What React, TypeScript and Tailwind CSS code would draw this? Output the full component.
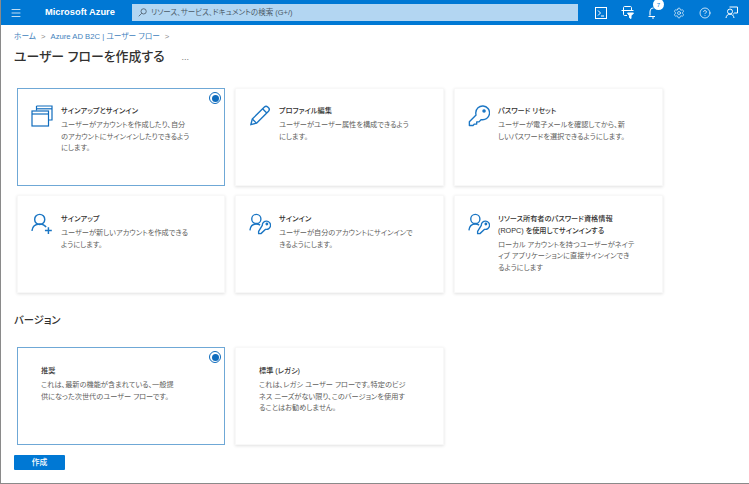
import React from 'react';
import { Menu, Settings, CircleHelp } from 'lucide-react';

const JP = "font-['Segoe_UI','Liberation_Sans','Noto_Sans_CJK_JP',sans-serif] [font-feature-settings:'palt']";

function WindowsIcon() {
  return (
    <svg width="22" height="22" viewBox="0 0 22 22" fill="none" stroke="#0f6cbd" strokeWidth="1.2">
      <path d="M5.500 1h15.500v14H17.500" />
      <path d="M5.500 3.800h15.500" />
      <path d="M5.500 5.500V1" />
      <rect x="1" y="6" width="16.500" height="15" fill="#fff" />
      <path d="M1 9h16.500" />
    </svg>
  );
}

function PencilIcon() {
  return (
    <svg width="22" height="22" viewBox="0 0 24 24" fill="none" stroke="#1b76c4" strokeWidth="1.500" strokeLinejoin="round">
      <path d="M2 21.500l1.600-6.200L16.800 2.200c1-1 2.600-1 3.600 0l.9.9c1 1 1 2.600 0 3.600L8.200 19.800z" />
      <path d="M3.600 15.300l4.600 4.500M14.800 4.200l4.600 4.600" />
    </svg>
  );
}

function KeyIcon() {
  return (
    <svg width="22" height="22" viewBox="0 0 24 24" fill="none" stroke="#1b76c4" strokeWidth="1.500" strokeLinejoin="round">
      <path d="M8.500 8.500a7.500 7.500 0 1 1 6 7.400L12 18.400H9.500v2.400H7l-1.500 1.500H1.500v-4l7.300-7.300a7.500 7.500 0 0 1-.3-2.500z" />
      <circle cx="17.500" cy="6.500" r="1.200" fill="#1b76c4" />
    </svg>
  );
}

function UserPlusIcon() {
  return (
    <svg width="22" height="22" viewBox="0 0 24 24" fill="none" stroke="#1b76c4" strokeWidth="1.600">
      <circle cx="9.500" cy="7" r="5.500" />
      <path d="M1 19.500c.5-4.500 3.800-7.500 8.500-7.500 3 0 5.500 1.300 7 3.500" />
      <path d="M19 15.500v7.500M15.200 19.200h7.500" />
    </svg>
  );
}

function UserKeyIcon() {
  return (
    <svg width="22" height="22" viewBox="0 0 24 24" fill="none" stroke="#1b76c4" strokeWidth="1.500" strokeLinejoin="round">
      <circle cx="8" cy="6.500" r="5" />
      <path d="M1 19c.4-4 3-7 7-7 1.600 0 3 .4 4.100 1.200" />
      <path d="M14.500 13.500a4.500 4.500 0 1 1 3.600 4.300L13 22.500h-2.500V20z" />
      <circle cx="19.500" cy="12" r=".8" fill="#1b76c4" />
    </svg>
  );
}

function TopIcon({ children }: { children: React.ReactNode }) {
  return <div className="relative flex w-[26px] items-center justify-center">{children}</div>;
}

function Card({ icon, title, lines, selected, titleLines, padTop }: {
  icon?: React.ReactNode;
  title?: string;
  titleLines?: string[];
  lines: string[];
  selected?: boolean;
  padTop: string;
}) {
  return (
    <div className={`relative flex bg-white ${selected ? 'border border-[#6fa8d6]' : 'border border-[#f8f8f8] shadow-[0_1px_3px_rgba(0,0,0,0.12)]'} ${padTop}`}>
      {icon ? <div className="w-[43px] shrink-0 pl-[13px]">{icon}</div> : <div className="w-[23px] shrink-0" />}
      <div className="whitespace-nowrap">
        <div className="text-[7.200px] leading-[11.500px] font-medium text-[#323130]">
          {title ?? titleLines?.map((t) => <div key={t}>{t}</div>)}
        </div>
        <div className="mt-[2.500px] text-[7.200px] leading-[11.500px] text-[#605e5c]">
          {lines.map((l) => <div key={l}>{l}</div>)}
        </div>
      </div>
      {selected && (
        <span className="absolute right-[3px] top-[3px] flex h-[12px] w-[12px] items-center justify-center rounded-full border border-[#0f6cbd]">
          <span className="h-[7px] w-[7px] rounded-full bg-[#0f6cbd]" />
        </span>
      )}
    </div>
  );
}

export default function App() {
  return (
    <div className={`${JP} flex h-[484px] w-[749px] flex-col overflow-hidden border-l border-b border-[#8a8a8a] bg-white`}>
      <header className="flex h-[25px] shrink-0 items-center bg-[#0078d4] text-white">
        <Menu className="ml-[9px] h-[12px] w-[12px]" strokeWidth={1.500} />
        <span className="ml-[23px] w-[87px] text-[9.300px] font-semibold font-['Liberation_Sans',sans-serif]">Microsoft Azure</span>
        <div className="flex h-[17px] w-[446px] items-center bg-[#b3d6f2] text-[#4b5a68]">
          <svg className="ml-[6px]" width="9" height="9" viewBox="0 0 12 12" fill="none" stroke="currentColor" strokeWidth="1.100">
            <circle cx="7.500" cy="4.500" r="3.500" />
            <path d="M5 7L1 11" />
          </svg>
          <span className="ml-[4px] text-[7.500px]">リソース、サービス、ドキュメントの検索 (G+/)</span>
        </div>
        <div className="ml-[10px] flex items-center">
          <TopIcon>
            <svg width="12" height="12" viewBox="0 0 12 12" fill="none" stroke="#fff" strokeWidth="1">
              <rect x=".5" y=".5" width="11" height="11" />
              <path d="M3 3.500L5.500 6 3 8.500M6 9h3" />
            </svg>
          </TopIcon>
          <TopIcon>
            <svg width="13" height="13" viewBox="0 0 13 13" fill="none" stroke="#fff" strokeWidth="1">
              <path d="M2.500 4V1.500c0-.5.500-1 1-1h6c.5 0 1 .5 1 1V4" />
              <path d="M.5 4.500h12M2.500 4.500v4c0 .5.500 1 1 1H6" />
              <path d="M6.500 7h6L10 9.800v2.700l-1.500-.8V9.800z" fill="#fff" />
            </svg>
          </TopIcon>
          <TopIcon>
            <svg width="13" height="13" viewBox="0 0 13 13" fill="none" stroke="#fff" strokeWidth="1.100">
              <path d="M3 9.500V6c0-2.500 1.500-4 3.500-4" />
              <path d="M1.500 10.500H8M5 12h2" />
            </svg>
            <span className="absolute left-[13px] -top-[7px] flex h-[11px] w-[11px] items-center justify-center rounded-full bg-white text-[6px] leading-none text-[#0078d4]">7</span>
          </TopIcon>
          <TopIcon><Settings className="h-[12px] w-[12px]" strokeWidth={1.300} /></TopIcon>
          <TopIcon><CircleHelp className="h-[12px] w-[12px]" strokeWidth={1.500} /></TopIcon>
          <TopIcon>
            <svg width="13" height="13" viewBox="0 0 13 13" fill="none" stroke="#fff" strokeWidth="1">
              <circle cx="5" cy="5.500" r="2.500" />
              <path d="M1 12c.3-2.500 1.800-3.800 4-3.800S8.700 9.500 9 12" />
              <path d="M4.500 1h8v6H9.500L8.200 8.200" />
            </svg>
          </TopIcon>
        </div>
      </header>

      <main className="flex flex-1 flex-col pl-[13px]">
        <nav className="mt-[6px] flex h-[11px] items-center gap-[5px] text-[7.700px] leading-[11px] text-[#3f82bd]">
          <span>ホーム</span>
          <span className="text-[#8a8886]">&gt;</span>
          <span>Azure AD B2C | ユーザー フロー</span>
          <span className="text-[#8a8886]">&gt;</span>
        </nav>
        <div className="mt-[5px] flex h-[20px] items-center text-[#323130]">
          <h1 className="text-[12.900px] font-medium leading-[20px]">ユーザー フローを作成する</h1>
          <span className="ml-[17px] text-[9px] leading-none text-[#777]">...</span>
        </div>

        <div className="ml-[3px] mt-[21px] grid w-[645px] grid-cols-[208px_209px_209px] grid-rows-[98px_98px] gap-x-[10px] gap-y-[9px]">
          <Card padTop="pt-[16px]" selected icon={<WindowsIcon />} title="サインアップとサインイン" lines={['ユーザーがアカウントを作成したり、自分', 'のアカウントにサインインしたりできるよう', 'にします。']} />
          <Card padTop="pt-[16px]" icon={<PencilIcon />} title="プロファイル編集" lines={['ユーザーがユーザー属性を構成できるよう', 'にします。']} />
          <Card padTop="pt-[16px]" icon={<KeyIcon />} title="パスワード リセット" lines={['ユーザーが電子メールを確認してから、新', 'しいパスワードを選択できるようにします。']} />
          <Card padTop="pt-[17px]" icon={<UserPlusIcon />} title="サインアップ" lines={['ユーザーが新しいアカウントを作成できる', 'ようにします。']} />
          <Card padTop="pt-[17px]" icon={<UserKeyIcon />} title="サインイン" lines={['ユーザーが自分のアカウントにサインインで', 'きるようにします。']} />
          <Card padTop="pt-[17px]" icon={<UserKeyIcon />} titleLines={['リソース所有者のパスワード資格情報', '(ROPC) を使用してサインインする']} lines={['ローカル アカウントを持つユーザーがネイテ', 'ィブ アプリケーションに直接サインインでき', 'るようにします']} />
        </div>

        <h2 className="mt-[20px] text-[10.300px] font-medium leading-[16px] text-[#323130]">バージョン</h2>

        <div className="ml-[3px] mt-[18px] grid h-[98px] w-[427px] grid-cols-[208px_209px] gap-x-[10px]">
          <Card padTop="pt-[17px]" selected title="推奨" lines={['これは、最新の機能が含まれている、一般提', '供になった次世代のユーザー フローです。']} />
          <Card padTop="pt-[17px]" title="標準 (レガシ)" lines={['これは、レガシ ユーザー フローです。特定のビジ', 'ネス ニーズがない限り、このバージョンを使用す', 'ることはお勧めしません。']} />
        </div>

        <button className="mt-[10px] h-[15px] w-[51px] rounded-[1px] bg-[#0078d4] text-[7.800px] font-medium leading-[15px] text-white">作成</button>
      </main>
    </div>
  );
}
